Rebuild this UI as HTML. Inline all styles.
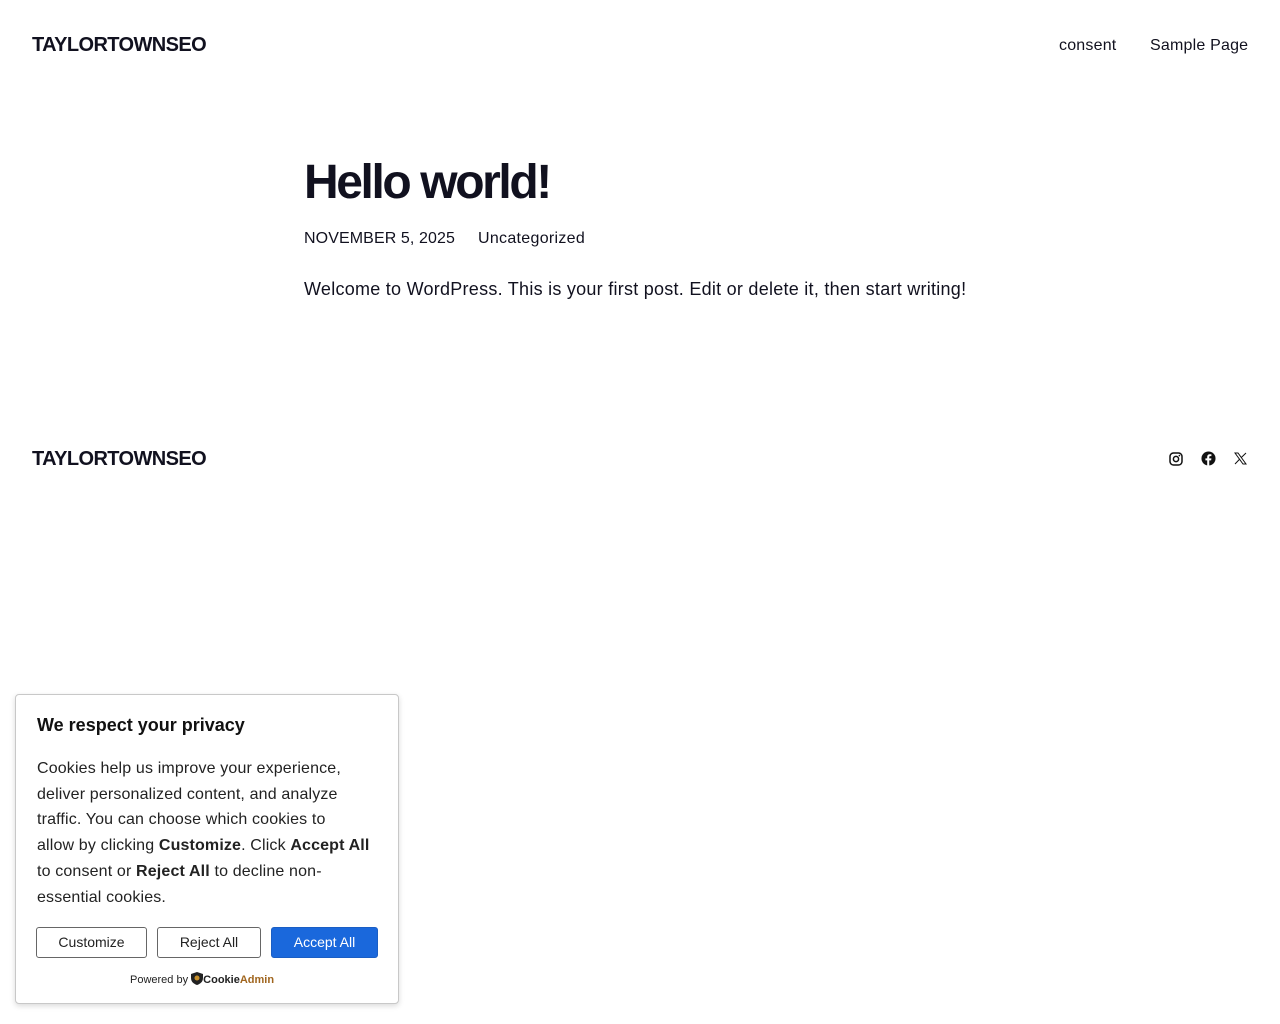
<!DOCTYPE html>
<html><head><meta charset="utf-8"><style>
*{margin:0;padding:0;box-sizing:border-box}
body{width:1280px;height:1024px;background:#fff;font-family:"Liberation Sans",sans-serif;color:#11111f;position:relative;overflow:hidden}
.abs{position:absolute;white-space:nowrap}
.logo{font-weight:bold;font-size:20px;letter-spacing:-0.6px}
.nav{font-size:16px;letter-spacing:0.2px}
h1{position:absolute;left:304px;top:155px;font-size:48px;font-weight:bold;letter-spacing:-2.4px}
.box{position:absolute;left:15px;top:694px;width:384px;height:310px;border:1px solid #c8c8c8;border-radius:4px;box-shadow:0 2px 6px rgba(0,0,0,.15);background:#fff}
.box h2{position:absolute;left:21px;top:20px;font-size:18px;font-weight:bold;color:#111}
.box p{position:absolute;left:21px;top:61px;width:345px;font-size:16px;line-height:25.7px;color:#222;letter-spacing:0.15px}
.btn{position:absolute;top:232px;height:31px;border:1px solid #666;border-radius:3px;font-size:14px;text-align:center;line-height:29px;color:#222;background:#fff}
</style></head><body>
<div class="abs logo" style="left:32px;top:34px">TAYLORTOWNSEO</div>
<div class="abs nav" style="left:1059px;top:37px">consent</div>
<div class="abs nav" style="left:1150px;top:37px">Sample Page</div>
<h1>Hello world!</h1>
<div class="abs" style="left:304px;top:230px;font-size:16px;letter-spacing:0.1px">NOVEMBER 5, 2025</div>
<div class="abs" style="left:478px;top:230px;font-size:16px;letter-spacing:0.3px">Uncategorized</div>
<div class="abs" style="left:304px;top:279px;font-size:18px;letter-spacing:0.26px">Welcome to WordPress. This is your first post. Edit or delete it, then start writing!</div>
<div class="abs logo" style="left:32px;top:448px">TAYLORTOWNSEO</div>
<svg class="abs" style="left:1169px;top:452px" width="14" height="14" viewBox="0 0 14 14"><rect x="1" y="1" width="12" height="12" rx="3.5" fill="none" stroke="#111" stroke-width="1.5"/><circle cx="7" cy="7" r="2.6" fill="none" stroke="#111" stroke-width="1.5"/><circle cx="10.4" cy="3.6" r=".8" fill="#111"/></svg>
<svg class="abs" style="left:1201px;top:451px" width="15" height="15" viewBox="0 0 16 16"><circle cx="8" cy="8" r="7.5" fill="#111"/><path d="M8.8 16V10h2l.3-2.2H8.8V6.5c0-.6.2-1 1.1-1h1.2V3.5c-.2 0-.9-.1-1.7-.1-1.7 0-2.8 1-2.8 2.9v1.5H4.7V10h1.9v6z" fill="#fff"/></svg>
<svg class="abs" style="left:1234px;top:452px" width="13" height="13" viewBox="0 0 13 13"><path d="M1 1h3l8 11H9z" fill="none" stroke="#111" stroke-width="1"/><path d="M1 12L5.8 7M7.3 5.5L12 1" stroke="#111" stroke-width="1"/></svg>
<div class="box">
<h2>We respect your privacy</h2>
<p>Cookies help us improve your experience,<br>deliver personalized content, and analyze<br>traffic. You can choose which cookies to<br>allow by clicking <b>Customize</b>. Click <b>Accept All</b><br>to consent or <b>Reject All</b> to decline non-<br>essential cookies.</p>
<div class="btn" style="left:20px;width:111px">Customize</div>
<div class="btn" style="left:141px;width:104px">Reject All</div>
<div class="btn" style="left:255px;width:107px;background:#1a68dc;border-color:#1a5ec4;color:#fff">Accept All</div>
<div class="abs" style="left:114px;top:277px;font-size:11px;color:#222">Powered by <svg width="12" height="13" viewBox="0 0 12 13" style="vertical-align:-2px"><path d="M6 0L12 2v4c0 4-3 6-6 7C3 12 0 10 0 6V2z" fill="#222"/><circle cx="6" cy="6" r="2.5" fill="#c8902a"/></svg><b style="font-size:11px">Cookie</b><b style="color:#a0651e">Admin</b></div>
</div>
</body></html>
